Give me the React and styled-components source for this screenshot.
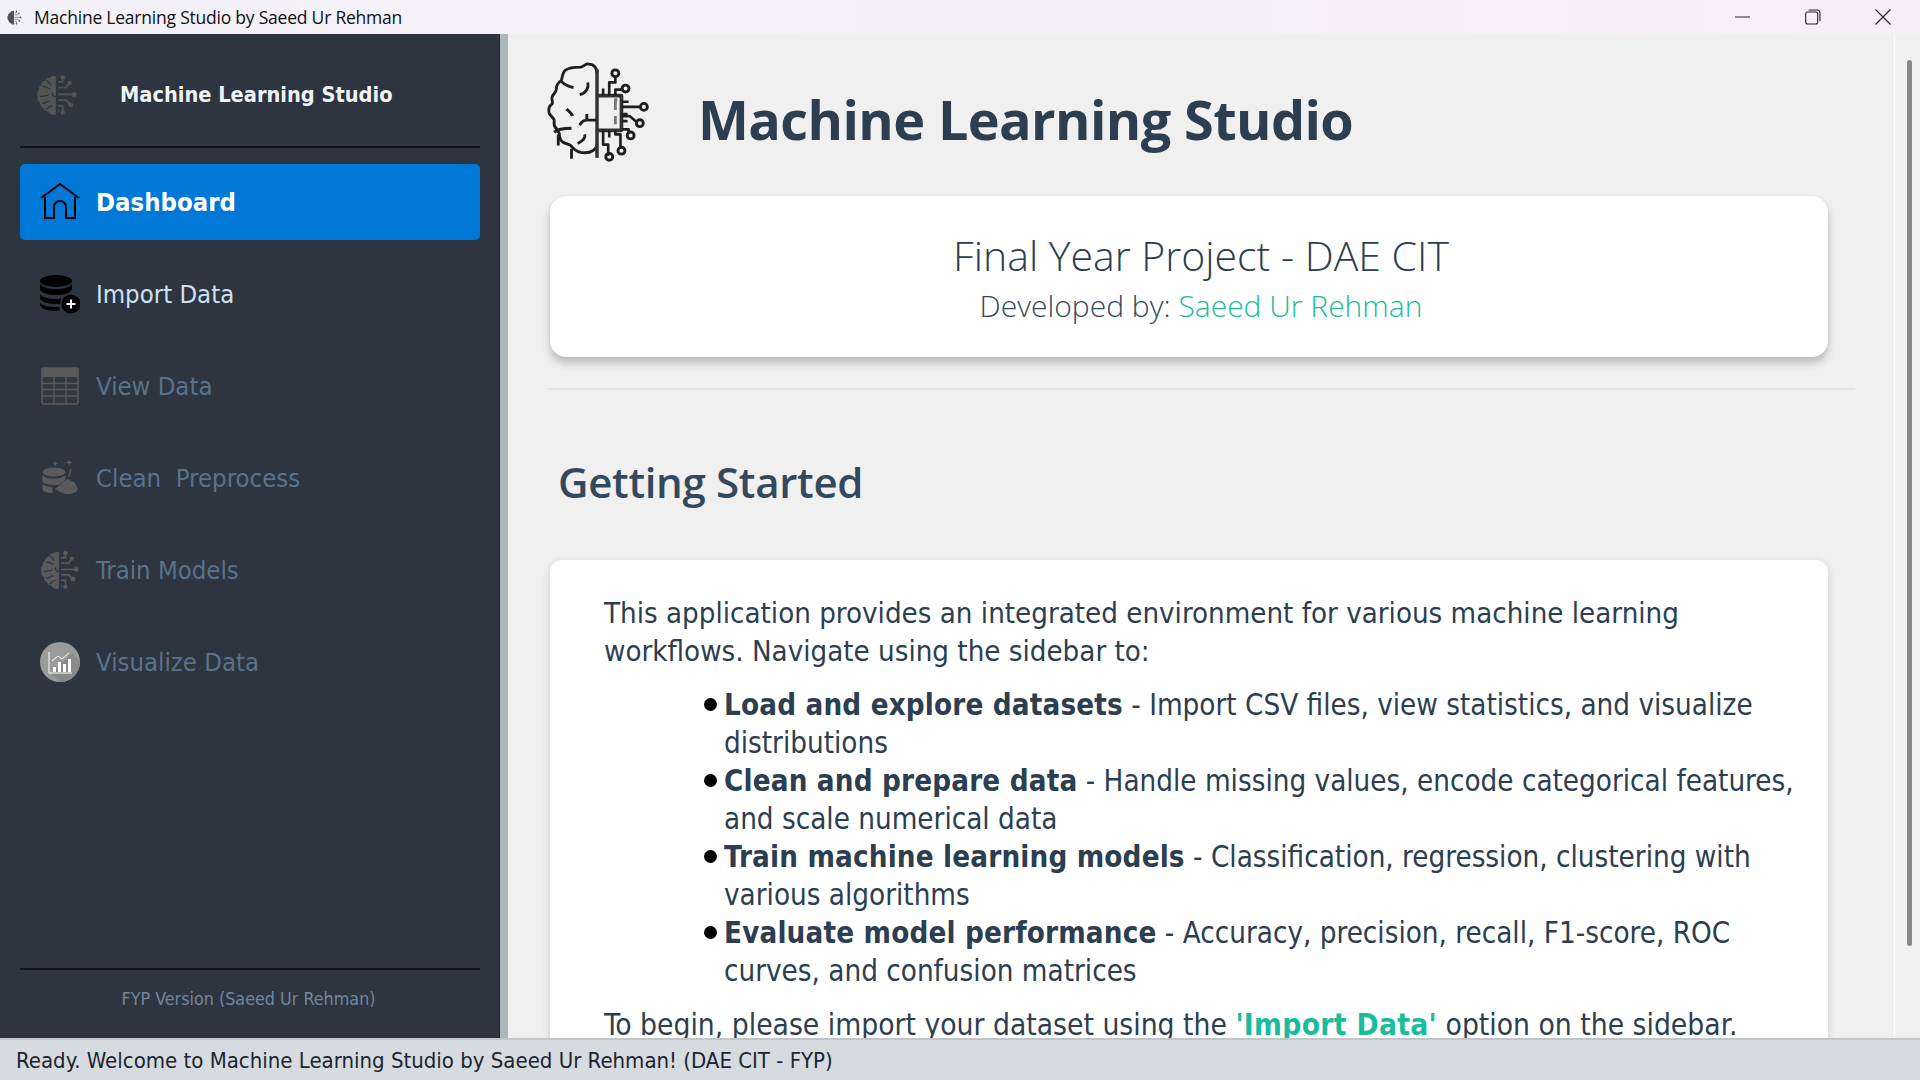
import React from "react";
import styled, { createGlobalStyle } from "styled-components";

const Global = createGlobalStyle`
  html, body { margin: 0; padding: 0; width: 100%; height: 100%; overflow: hidden; }
  #root { width: 1920px; height: 1080px; }
  * { box-sizing: border-box; }
`;
const tahoma = `"DejaVu Sans", "Noto Sans", sans-serif`;
const segoe = `"Open Sans", "Noto Sans", sans-serif`;

const Window = styled.div`
  width: 1920px; height: 1080px; display: flex; flex-direction: column; overflow: hidden; background: #f0f0f0;
`;
const TitleBar = styled.header`
  height: 34px; flex: none; display: flex; align-items: center; padding-left: 7px;
  background: linear-gradient(90deg, #f3f1f8 0%, #f4f0f8 60%, #f9eef7 85%, #f6eff8 100%);
`;
const TitleText = styled.span`
  margin-left: 12px; font: 400 17.5px ${segoe}; color: #111; letter-spacing: -0.22px;
`;
const WindowButtons = styled.div`
  margin-left: auto; display: flex; align-items: center; gap: 54px; padding-right: 29px;
`;
const Body = styled.div`
  flex: 1; min-height: 0; display: flex;
`;
const Sidebar = styled.aside`
  width: 500px; flex: none; background: #2c3540; border-right: 1px solid #1f262e;
  display: flex; flex-direction: column; padding: 0 19px 0 20px;
`;
const Brand = styled.div`
  height: 114px; display: flex; align-items: center; border-bottom: 2px solid #10151a; padding: 9px 0 0 16px; flex: none;
`;
const BrandName = styled.h2`
  margin: 0 0 0 42px; font: 700 21.6px ${tahoma}; font-stretch: condensed; color: #f0f3f5; white-space: nowrap;
`;
const Nav = styled.nav`
  margin-top: 16px; display: flex; flex-direction: column; gap: 16px;
`;
const NavItem = styled.div`
  height: 76px; border-radius: 5px; display: flex; align-items: center; gap: 16px; padding-left: 20px;
  background: ${(p) => (p.$active ? "#0078d7" : "transparent")};
  color: ${(p) => (p.$active ? "#fff" : p.$disabled ? "#5a728a" : "#cfe0f2")};
  font: ${(p) => (p.$active ? 700 : 400)} 25.5px ${tahoma}; font-stretch: condensed; white-space: pre;
`;
const IconSlot = styled.span`
  width: 40px; height: 40px; flex: none; display: flex; align-items: center; justify-content: center;
`;
const Foot = styled.div`
  margin-top: auto; height: 70px; border-top: 2px solid #10151a; display: flex; align-items: center; justify-content: center;
  font: 400 17.8px ${tahoma}; font-stretch: condensed; color: #74879a; padding: 0 3px 12px 0;
`;
const Splitter = styled.div`
  width: 8px; flex: none; background: #adb5bd;
`;
const Main = styled.main`
  flex: 1; min-width: 0; position: relative; overflow: hidden; padding: 26px 65px 0 40px;
`;
const Header = styled.div`
  display: flex; align-items: center; height: 105px; margin-left: -5px;
`;
const Heading = styled.h1`
  margin: 12px 0 0 48px; font: 700 54px ${segoe}; color: #2c3e50; white-space: nowrap; letter-spacing: -0.6px;
`;
const Hero = styled.section`
  margin: 31px 0 0 2px; width: 1278px; height: 161px; background: #fff; border-radius: 16px;
  box-shadow: 0 6px 9px rgba(0,0,0,.22), 0 0 2px rgba(0,0,0,.08);
  display: flex; flex-direction: column; align-items: center; justify-content: center; padding: 3px 0 0 24px;
`;
const HeroTitle = styled.div`
  font: 300 41px/50px ${segoe}; color: #2c3e50;
`;
const HeroSub = styled.div`
  margin-top: 5px; font: 300 30px/42px ${segoe}; color: #34495e;
`;
const Accent = styled.span`
  color: #1abc9c;
`;
const Rule = styled.hr`
  margin: 31px 0 0 0; border: 0; height: 2px; background: #e0e5e9;
`;
const Section = styled.h2`
  margin: 60px 0 0 10px; font: 600 42px/64px ${segoe}; color: #34495e; letter-spacing: -0.3px;
`;
const Card = styled.section`
  margin: 46px 0 0 2px; width: 1278px; height: 600px; background: #fff; border-radius: 12px;
  box-shadow: 0 2px 8px rgba(0,0,0,.14);
  padding: 34px 20px 0 54px;
  font: 400 29.2px/38px ${tahoma}; font-stretch: condensed; color: #2c3e50;
`;
const Para = styled.p`
  margin: 0; white-space: nowrap; font-size: ${(p) => p.$size || "inherit"};
`;
const List = styled.ul`
  margin: 16px 0; padding: 0 0 0 120px; list-style: none; font-size: 29.3px;
`;
const Item = styled.li`
  position: relative; white-space: nowrap;
  &::before { content: ""; position: absolute; left: -20px; top: 12px; width: 13px; height: 13px; border-radius: 50%; background: #000; }
`;
const Strong = styled.b`
  font-weight: 700; letter-spacing: 0.15px;
`;
const GreenStrong = styled.b`
  font-weight: 700; color: #1abc9c; letter-spacing: 0.3px;
`;
const ScrollLine = styled.div`
  position: absolute; top: 0; bottom: 0; right: 25px; width: 1px; background: #fbfbfb;
`;
const ScrollThumb = styled.div`
  position: absolute; top: 26px; right: 8px; width: 5px; height: 886px; border-radius: 3px; background: #888;
`;
const Status = styled.footer`
  height: 42px; flex: none; background: #d6dbdf; border-top: 2px solid #c0c5c9; display: flex; align-items: center; padding: 0 0 0 16px;
  font: 400 22px ${tahoma}; font-stretch: condensed; color: #1c2530; white-space: nowrap;
`;

const NeuralBrain = ({ size, color }) => (
  <svg width={size} height={size} viewBox="1 1 36 37">
    <path fill={color} d="M18 3c-2-1-4 0-5 1-2 0-4 1-4 3-2 0-4 2-4 4-2 1-2 3-2 4-2 2-2 4-1 6-1 2 0 4 2 5 0 2 1 4 3 5 0 2 2 3 4 3 1 2 3 3 5 3 1 0 2 0 2-1z" />
    <g stroke="#2c3540" strokeWidth="1.1" fill="none">
      <path d="M6 12c3 0 5 2 7 2M4 21c3-1 6 0 8-2M6 27c3 0 4-2 7-2M10 6c1 3 3 3 4 5M9 33c2-2 3-4 6-4M15 17c-1 2 1 4 3 4" />
    </g>
    <g stroke={color} strokeWidth="1.5" fill="none">
      <path d="M20 8h4v-3M20 13h7l2-3M20 19h12M20 24h7l3 3M20 29h4v4M20 34h1" />
    </g>
    <g fill={color}>
      <circle cx="24" cy="4" r="2" /><circle cx="30" cy="9" r="2" /><circle cx="34" cy="19" r="2.2" /><circle cx="31" cy="28" r="2.2" /><circle cx="24" cy="35" r="2" />
    </g>
  </svg>
);

const BigLogo = () => (
  <svg width="107" height="107" viewBox="15 10 105 105" fill="none" stroke="#1f1f1f" strokeWidth="2.8" strokeLinejoin="round">
    <path d="M68 24c0-5-3-9-8-9-3-1-4 2-8 3-6 0-11 0-15 3-3 2-3 7-4 10-3 2-5 5-5 9 0 3-3 4-4 7-1 3 1 5 0 7-3 2-4 5-3 9 1 3 4 4 5 7 0 3-1 6 2 8l3 5c0 4 1 7 4 9 3 2 7 1 9 5 3 3 7 5 12 5 6 0 12-3 12-9"/>
    <path d="M68 20v87" strokeWidth="3.4" stroke="#333"/>
    <path d="M33 32c3 3 7 5 12 6M59 33c1 5-1 10-8 12M38 59c2 2 5 4 6 7M51 75c2-3 3-5 7-5h10M58 64v6M26 82c3-3 10-4 17-4M56 84c1 4-3 7-7 9M30 95v-11M43 98v10"/>
    <path d="M68 46h24v34H68" strokeWidth="3.6" stroke="#333"/>
    <path d="M74 46v-7M80 46V33h6v-6M86 46v-6h8M92 52h7M92 57h18M92 64h6M92 66h8l6 5M92 71h6M92 79h7v4M74 80v6M80 80v7M86 80v4h5v12M74 86v8h5v11" strokeWidth="2.6"/>
    <path d="M88 50h-2v10M86 66v8" stroke="#777"/>
    <circle cx="86" cy="24" r="3.4"/><circle cx="96" cy="39" r="3.4"/><circle cx="114" cy="57" r="3.4"/><circle cx="110" cy="73" r="3.4"/><circle cx="101" cy="85" r="3.4"/><circle cx="92" cy="100" r="3.4"/><circle cx="80" cy="106" r="3.4"/>
  </svg>
);

const HomeIcon = () => (
  <svg width="40" height="40" viewBox="0 0 40 40" fill="none" stroke="#000" strokeWidth="2">
    <path d="M1 16 20 2l19 14" /><path d="M5 15v21h9V25a6 6 0 0 1 12 0v11h9V15" strokeWidth="2"/>
  </svg>
);
const DbPlusIcon = () => (
  <svg width="40" height="40" viewBox="0 0 40 40">
    <g fill="#000">
      <ellipse cx="16" cy="7" rx="16" ry="6" />
      <path d="M0 10c3 4 9 5 16 5s13-1 16-5v6c-3 4-9 5-16 5S3 20 0 16z" />
      <path d="M0 20c3 4 9 5 16 5 2 0 4 0 5-1l-1 6-4 0C9 30 3 29 0 25z" />
      <path d="M0 29c3 3 9 4 16 4l3 0 1 3-4 1C7 37 0 34 0 31z" />
      <circle cx="31" cy="30" r="9.5" />
    </g>
    <path d="M31 25.5v9M26.5 30h9" stroke="#fff" strokeWidth="2" />
  </svg>
);
const TableIcon = () => (
  <svg width="38" height="38" viewBox="0 0 38 38" fill="none">
    <rect x="1" y="1" width="36" height="36" rx="2" fill="#33383d" stroke="#5a5a5a" strokeWidth="1.6" />
    <path d="M1 3a2 2 0 0 1 2-2h32a2 2 0 0 1 2 2v7H1z" fill="#5a5a5a" />
    <path d="M1 16.500h36M1 22.500h36M1 29h36M13 10v27M25 10v27" stroke="#5a5a5a" strokeWidth="1.4" />
  </svg>
);
const CleanIcon = () => (
  <svg width="40" height="40" viewBox="0 0 40 40" fill="#5a5a5a">
    <path d="M3 4.500l1 2.200 2 .8-2 .8-1 2.200-1-2.200-2-.8 2-.8z" transform="translate(12 -2)" />
    <path d="M29 1l1 2.500 2.500 1-2.500 1-1 2.500-1-2.500-2.500-1 2.500-1z" />
    <ellipse cx="14" cy="14" rx="11.500" ry="4.500" />
    <path d="M2.500 17c3 3 7 3.500 11.500 3.500s8-.5 11.500-3.500v5c-3 1.500-5 4-7 5h-5c-5 0-8.500-1-11-3zM2.500 26c3 2 6 3 10 3v6c-5 0-10-1-10-4z" />
    <path d="M15 31l8-7 5-3 7 4 3 6-2 3-3 1-3 1-5 0-5-2z" />
    <path d="M29 19l2-8" stroke="#5a5a5a" strokeWidth="1.5" />
  </svg>
);
const ChartIcon = () => (
  <svg width="40" height="40" viewBox="0 0 40 40">
    <circle cx="20" cy="20" r="20" fill="#9b9b9b" />
    <path d="M20 40a20 20 0 0 0 20-20L32 11 11 32z" fill="#8a8a8a" />
    <path d="M9 10v21h23" stroke="#fff" strokeWidth="1" fill="none" />
    <path d="M12 19l6-5 4 3 7-6" stroke="#fff" strokeWidth="1" fill="none" />
    <path d="M13 25h3v5h-3zM18 20h3v10h-3zM23 22h3v8h-3zM28 17h3v13h-3z" fill="#fff" />
  </svg>
);

const Min = () => (<svg width="16" height="16" viewBox="0 0 16 16"><path d="M0 8h15" stroke="#222" strokeWidth="1" /></svg>);
const Max = () => (<svg width="16" height="16" viewBox="0 0 16 16" fill="none" stroke="#222" strokeWidth="1.100"><rect x=".7" y="3" width="12" height="12" rx="2"/><path d="M3.500 1h8.500a3 3 0 0 1 3 3v8"/></svg>);
const Close = () => (<svg width="16" height="16" viewBox="0 0 16 16"><path d="M.5.5l15 15M15.500.5l-15 15" stroke="#222" strokeWidth="1.100" /></svg>);

export default function App() {
  return (
    <Window>
      <Global />
      <TitleBar>
        <NeuralBrain size={15} color="#555" />
        <TitleText>Machine Learning Studio by Saeed Ur Rehman</TitleText>
        <WindowButtons><Min /><Max /><Close /></WindowButtons>
      </TitleBar>
      <Body>
        <Sidebar>
          <Brand>
            <NeuralBrain size={42} color="#545454" />
            <BrandName>Machine Learning Studio</BrandName>
          </Brand>
          <Nav>
            <NavItem $active><IconSlot><HomeIcon /></IconSlot>Dashboard</NavItem>
            <NavItem><IconSlot><DbPlusIcon /></IconSlot>Import Data</NavItem>
            <NavItem $disabled><IconSlot><TableIcon /></IconSlot>View Data</NavItem>
            <NavItem $disabled><IconSlot><CleanIcon /></IconSlot>{"Clean  Preprocess"}</NavItem>
            <NavItem $disabled><IconSlot><NeuralBrain size={40} color="#5a5a5a" /></IconSlot>Train Models</NavItem>
            <NavItem $disabled><IconSlot><ChartIcon /></IconSlot>Visualize Data</NavItem>
          </Nav>
          <Foot>FYP Version (Saeed Ur Rehman)</Foot>
        </Sidebar>
        <Splitter />
        <Main>
          <Header>
            <BigLogo />
            <Heading>Machine Learning Studio</Heading>
          </Header>
          <Hero>
            <HeroTitle>Final Year Project - DAE CIT</HeroTitle>
            <HeroSub>Developed by: <Accent>Saeed Ur Rehman</Accent></HeroSub>
          </Hero>
          <Rule />
          <Section>Getting Started</Section>
          <Card>
            <Para>This application provides an integrated environment for various machine learning<br />workflows. Navigate using the sidebar to:</Para>
            <List>
              <Item><Strong>Load and explore datasets</Strong> - Import CSV files, view statistics, and visualize<br />distributions</Item>
              <Item><Strong>Clean and prepare data</Strong> - Handle missing values, encode categorical features,<br />and scale numerical data</Item>
              <Item><Strong>Train machine learning models</Strong> - Classification, regression, clustering with<br />various algorithms</Item>
              <Item><Strong>Evaluate model performance</Strong> - Accuracy, precision, recall, F1-score, ROC<br />curves, and confusion matrices</Item>
            </List>
            <Para $size="29.7px">To begin, please import your dataset using the <GreenStrong>'Import Data'</GreenStrong> option on the sidebar.</Para>
          </Card>
          <ScrollLine />
          <ScrollThumb />
        </Main>
      </Body>
      <Status>Ready. Welcome to Machine Learning Studio by Saeed Ur Rehman! (DAE CIT - FYP)</Status>
    </Window>
  );
}
